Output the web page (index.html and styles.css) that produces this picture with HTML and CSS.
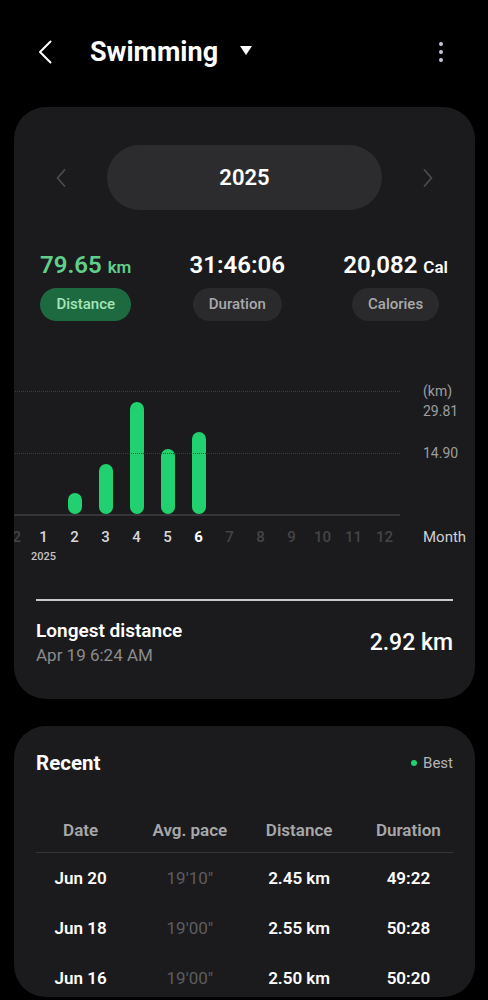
FILE: index.html
```html
<!DOCTYPE html>
<html lang="en">
<head>
    <meta charset="UTF-8">
    <meta name="viewport" content="width=device-width, initial-scale=1.0">
    <title>Swimming</title>
    <link rel="stylesheet" href="styles.css">
</head>
<body>
<header class="topbar">
    <span class="back">
        <svg width="14" height="24" viewBox="0 0 14 24"><path d="M12.5 1.5 L2 12 L12.5 22.5" fill="none" stroke="#fff" stroke-width="2" stroke-linecap="round" stroke-linejoin="round"/></svg>
    </span>
    <h1>Swimming</h1>
    <span class="caret"></span>
    <span class="kebab"><i></i><i></i><i></i></span>
</header>

<section class="card summary">
    <div class="year-row">
        <span class="nav-arrow">
            <svg width="10" height="18" viewBox="0 0 10 18"><path d="M8.5 1 L1.5 9 L8.5 17" fill="none" stroke="#4b4b4d" stroke-width="1.8" stroke-linecap="round" stroke-linejoin="round"/></svg>
        </span>
        <div class="year-pill">2025</div>
        <span class="nav-arrow">
            <svg width="10" height="18" viewBox="0 0 10 18"><path d="M1.5 1 L8.5 9 L1.5 17" fill="none" stroke="#4b4b4d" stroke-width="1.8" stroke-linecap="round" stroke-linejoin="round"/></svg>
        </span>
    </div>

    <div class="stats">
        <div class="stat active">
            <div class="stat-value">79.65 <small>km</small></div>
            <span class="stat-tab">Distance</span>
        </div>
        <div class="stat">
            <div class="stat-value">31:46:06</div>
            <span class="stat-tab">Duration</span>
        </div>
        <div class="stat">
            <div class="stat-value">20,082 <small>Cal</small></div>
            <span class="stat-tab">Calories</span>
        </div>
    </div>

    <div class="chart">
        <div class="plot">
            <span class="grid-line top"></span>
            <span class="grid-line mid"></span>
            <div class="col"></div>
            <div class="col"></div>
            <div class="col"><span class="bar" style="height:21px"></span></div>
            <div class="col"><span class="bar" style="height:50px"></span></div>
            <div class="col"><span class="bar" style="height:112px"></span></div>
            <div class="col"><span class="bar" style="height:65px"></span></div>
            <div class="col"><span class="bar" style="height:82px"></span></div>
            <div class="col"></div>
            <div class="col"></div>
            <div class="col"></div>
            <div class="col"></div>
            <div class="col"></div>
            <div class="col"></div>
        </div>
        <div class="axis">
            <span>(km)</span>
            <span>29.81</span>
            <span class="axis-mid">14.90</span>
        </div>
        <div class="months">
            <span class="off">12</span>
            <span>1<em>2025</em></span>
            <span>2</span>
            <span>3</span>
            <span>4</span>
            <span>5</span>
            <span class="current">6</span>
            <span class="off">7</span>
            <span class="off">8</span>
            <span class="off">9</span>
            <span class="off">10</span>
            <span class="off">11</span>
            <span class="off">12</span>
        </div>
        <div class="axis-unit">Month</div>
    </div>

    <div class="divider"></div>

    <div class="record">
        <div>
            <div class="record-title">Longest distance</div>
            <div class="record-date">Apr 19 6:24 AM</div>
        </div>
        <div class="record-value">2.92 km</div>
    </div>
</section>

<section class="card recent">
    <div class="recent-head">
        <h2>Recent</h2>
        <span class="best"><i></i>Best</span>
    </div>
    <div class="table">
        <div class="row head">
            <span>Date</span>
            <span>Avg. pace</span>
            <span>Distance</span>
            <span>Duration</span>
        </div>
        <div class="row">
            <span>Jun 20</span>
            <span class="pace">19'10"</span>
            <span>2.45 km</span>
            <span>49:22</span>
        </div>
        <div class="row">
            <span>Jun 18</span>
            <span class="pace">19'00"</span>
            <span>2.55 km</span>
            <span>50:28</span>
        </div>
        <div class="row">
            <span>Jun 16</span>
            <span class="pace">19'00"</span>
            <span>2.50 km</span>
            <span>50:20</span>
        </div>
    </div>
</section>
</body>
</html>
```

FILE: styles.css
```css
body {
    margin: 0;
    padding: 0;
    background-color: #000;
    color: #fff;
    font-family: 'Roboto', 'Noto Sans', sans-serif;
    overflow: hidden;
}

/* top bar */
.topbar {
    display: flex;
    align-items: center;
    height: 104px;
    padding: 0 0 0 38px;
}
.back {
    display: flex;
    width: 14px;
    height: 24px;
}
.topbar h1 {
    margin: 0 0 0 38px;
    font-size: 27px;
    font-weight: 700;
}
.caret {
    width: 0;
    height: 0;
    margin: 0 0 4px 22px;
    border-left: 6px solid transparent;
    border-right: 6px solid transparent;
    border-top: 9px solid #fff;
}
.kebab {
    display: flex;
    flex-direction: column;
    gap: 4px;
    margin-left: auto;
    margin-right: 45px;
}
.kebab i {
    display: block;
    width: 4px;
    height: 4px;
    border-radius: 50%;
    background-color: #c8c4dc;
}

/* cards */
.card {
    margin: 3px 13px 0 14px;
    background-color: #1b1b1d;
    border-radius: 32px;
    overflow: hidden;
}
.summary {
    padding: 38px 22px 34px;
}

.year-row {
    display: flex;
    justify-content: center;
    align-items: center;
    gap: 36px;
}
.nav-arrow {
    display: flex;
    justify-content: center;
    width: 20px;
}
.year-pill {
    width: 275px;
    height: 65px;
    border-radius: 33px;
    background-color: #2c2c2e;
    display: flex;
    justify-content: center;
    align-items: center;
    font-size: 22px;
    font-weight: 600;
}

.stats {
    display: flex;
    justify-content: space-between;
    margin-top: 41px;
    padding: 0 5px 0 4px;
}
.stat {
    display: flex;
    flex-direction: column;
    align-items: center;
}
.stat-value {
    height: 28px;
    font-size: 24px;
    font-weight: 600;
    line-height: 28px;
}
.stat-value small {
    font-size: 17px;
    font-weight: 600;
    line-height: 0;
}
.stat-tab {
    margin-top: 9px;
    height: 33px;
    line-height: 33px;
    padding: 0 16px;
    border-radius: 17px;
    background-color: #2a2a2c;
    color: #a9a9ab;
    font-size: 15px;
    font-weight: 500;
}
.stat.active .stat-value {
    color: #5fcf8b;
}
.stat.active .stat-tab {
    background-color: #1e6a40;
    color: #a3e6b9;
}

/* chart */
.chart {
    display: grid;
    grid-template-columns: 403px auto;
    column-gap: 23px;
    margin: 70px 0 0 -39px;
}
.plot {
    position: relative;
    display: flex;
    height: 123px;
    border-bottom: 2px solid #363638;
}
.grid-line {
    position: absolute;
    left: 0;
    right: 0;
    border-top: 1px dotted #3d3d40;
}
.grid-line.top {
    top: 0;
}
.grid-line.mid {
    top: 62px;
}
.col {
    flex: 1;
    display: flex;
    justify-content: center;
    align-items: flex-end;
}
.bar {
    display: block;
    width: 14px;
    border-radius: 7px;
    background-color: #21d06f;
}
.axis {
    display: flex;
    flex-direction: column;
    margin-top: -10px;
    color: #9d9d9f;
    font-size: 14px;
    line-height: 20px;
}
.axis .axis-mid {
    margin-top: 22px;
}
.months {
    display: flex;
    margin-top: 11px;
}
.months span {
    flex: 1;
    display: flex;
    flex-direction: column;
    align-items: center;
    color: #d8d8da;
    font-size: 15px;
    font-weight: 500;
    line-height: 20px;
}
.months em {
    margin-top: 3px;
    font-style: normal;
    font-size: 11px;
    font-weight: 500;
    line-height: 14px;
    color: #c4c4c6;
}
.months .current {
    color: #fff;
    font-weight: 700;
}
.months .off {
    color: #444446;
}
.axis-unit {
    margin-top: 11px;
    font-size: 15px;
    line-height: 20px;
    color: #d0d0d2;
}

.divider {
    margin-top: 35px;
    height: 2px;
    background-color: #c9c9cb;
}

.record {
    display: flex;
    justify-content: space-between;
    align-items: center;
    margin-top: 18px;
}
.record-title {
    font-size: 19px;
    font-weight: 600;
    line-height: 24px;
}
.record-date {
    margin-top: 2px;
    font-size: 17px;
    line-height: 20px;
    color: #8b8b8d;
}
.record-value {
    font-size: 23px;
    font-weight: 500;
}

/* recent */
.recent {
    margin-top: 27px;
    padding: 25px 22px 0;
    border-radius: 32px;
}
.recent-head {
    display: flex;
    justify-content: space-between;
    align-items: center;
}
.recent h2 {
    margin: 0;
    font-size: 20.5px;
    font-weight: 700;
    line-height: 24px;
}
.best {
    display: flex;
    align-items: center;
    font-size: 15px;
    color: #b4b4b6;
}
.best i {
    width: 6px;
    height: 6px;
    margin-right: 6px;
    border-radius: 50%;
    background-color: #21d06f;
}
.table {
    margin: 43px -10px 0;
}
.row {
    display: grid;
    grid-template-columns: repeat(4, 1fr);
    align-items: center;
    height: 50px;
    font-size: 17px;
    font-weight: 600;
    text-align: center;
}
.row.head {
    height: auto;
    padding-bottom: 11px;
    line-height: 24px;
    color: #a8a8aa;
    background: linear-gradient(#353537, #353537) center bottom / calc(100% - 20px) 1px no-repeat;
}
.row .pace {
    color: #5d5d5f;
    font-weight: 400;
}
.row:last-child {
    align-items: start;
    height: 29px;
    padding-top: 15px;
}
```
